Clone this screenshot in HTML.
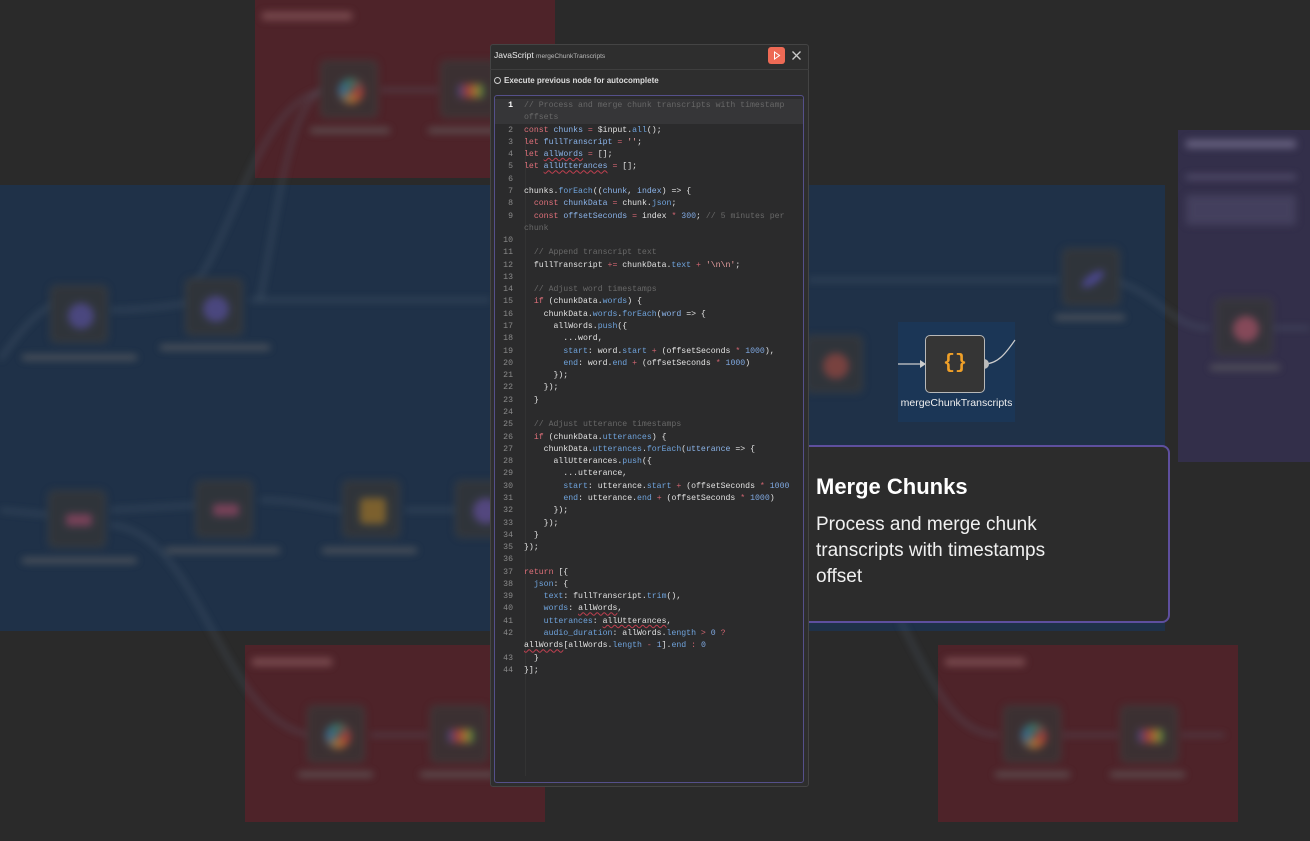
<!DOCTYPE html>
<html><head><meta charset="utf-8"><style>
*{margin:0;padding:0;box-sizing:border-box}
body{width:1310px;height:841px;background:#2a2a2a;position:relative;overflow:hidden;font-family:"Liberation Sans",sans-serif}
.a{position:absolute}
.bg{filter:blur(4px)}
.dim{opacity:.75}
.node{position:absolute;width:58px;height:58px;background:#363636;border:2px solid #444;border-radius:6px}
.blob{position:absolute;left:16px;top:16px;width:26px;height:26px;border-radius:50%;opacity:.7}
.lbl{position:absolute;height:5px;background:#666;border-radius:2px}
#panel{left:490px;top:44px;width:319px;height:743px;background:#2e2e2e;border:1px solid #444;border-radius:3px}
#ed{left:494px;top:95px;width:310px;height:688px;background:#2b2b2c;border:1px solid #55508a;border-radius:3px;overflow:hidden}
.r{position:absolute;left:0;height:12.28px;width:310px;font:8.2px/12.28px "Liberation Mono",monospace;color:#e2e2e2;white-space:pre}
.r .n{position:absolute;left:4px;width:14px;text-align:right;color:#8a8a8a}
.r .c{position:absolute;left:29px}
.k{color:#e0707a}.v{color:#8bb4ea}.p{color:#6fa3dc}.cm{color:#686868}.o{color:#d06470}.num{color:#7fa8e0}.s{color:#e8a0a0}
.u{text-decoration:underline wavy #c04050;text-decoration-thickness:1px}
</style></head><body>
<div class="a" style="left:0;top:185px;width:1165px;height:446px;background:#1f3148"></div>
<div class="a" style="left:255px;top:0;width:300px;height:178px;background:#4e2329"></div>
<div class="a" style="left:245px;top:645px;width:300px;height:177px;background:#4e2329"></div>
<div class="a" style="left:938px;top:645px;width:300px;height:177px;background:#4e2329"></div>
<div class="a" style="left:1178px;top:130px;width:140px;height:332px;background:#332f4a"></div>
<div class="dim">
<div class="a bg" style="left:262px;top:12px;width:90px;height:8px;background:#8a5a5e"></div>
<div class="a bg" style="left:252px;top:658px;width:80px;height:8px;background:#8a5a5e"></div>
<div class="a bg" style="left:945px;top:658px;width:80px;height:8px;background:#8a5a5e"></div>
<div class="a bg" style="left:1186px;top:140px;width:110px;height:8px;background:#7a7494"></div>
<div class="a bg" style="left:1186px;top:175px;width:110px;height:4px;background:#6a6484"></div>
<div class="a bg" style="left:1186px;top:195px;width:110px;height:30px;background:#4a4664"></div>
<svg class="a bg" width="1310" height="841" style="left:0;top:0" fill="none" stroke="#5a6a7a" stroke-width="2">
<path d="M0 360 C40 300 60 300 80 300"/><path d="M110 310 C160 310 200 300 215 300"/>
<path d="M190 290 C230 250 260 90 330 90"/><path d="M260 300 C280 200 290 90 330 90"/>
<path d="M250 300 L490 300"/><path d="M380 90 L440 90"/>
<path d="M0 510 L50 515"/><path d="M110 510 L200 505"/><path d="M110 525 C200 530 220 720 310 735"/>
<path d="M260 500 C300 500 330 510 345 510"/><path d="M405 510 L460 510"/>
<path d="M370 735 L430 735"/><path d="M808 280 L1060 280"/><path d="M1100 280 C1150 280 1170 330 1210 328"/>
<path d="M900 620 C940 700 960 735 1000 735"/><path d="M1060 735 L1120 735"/><path d="M1180 735 L1225 735"/>
<path d="M1270 328 L1310 328"/>
</svg>
<div class="bg">
<div class="node" style="left:320px;top:60px"><div class="blob" style="background:conic-gradient(#3a8,#e44,#fa3,#39d,#3a8)"></div></div>
<div class="node" style="left:440px;top:60px"><div class="blob" style="background:linear-gradient(90deg,#36d,#e44,#fb3,#3c5);border-radius:3px;height:14px;top:22px"></div></div>
<div class="node" style="left:50px;top:285px"><div class="blob" style="background:#6a5ab8"></div></div>
<div class="node" style="left:185px;top:278px"><div class="blob" style="background:#6a5ab8"></div></div>
<div class="node" style="left:48px;top:490px"><div class="blob" style="background:#c05070;border-radius:3px;height:12px;top:22px"></div></div>
<div class="node" style="left:195px;top:480px"><div class="blob" style="background:#c05070;border-radius:3px;height:12px;top:22px"></div></div>
<div class="node" style="left:342px;top:480px"><div class="blob" style="background:#c88a20;border-radius:4px"></div></div>
<div class="node" style="left:455px;top:480px"><div class="blob" style="background:#7a5ab8"></div></div>
<div class="node" style="left:307px;top:705px"><div class="blob" style="background:conic-gradient(#3a8,#e44,#fa3,#39d,#3a8)"></div></div>
<div class="node" style="left:430px;top:705px"><div class="blob" style="background:linear-gradient(90deg,#36d,#e44,#fb3,#3c5);border-radius:3px;height:14px;top:22px"></div></div>
<div class="node" style="left:805px;top:335px"><div class="blob" style="background:#c05040"></div></div>
<div class="node" style="left:1062px;top:248px"><div class="blob" style="background:#6a5ad0;height:10px;top:24px;transform:rotate(-35deg)"></div></div>
<div class="node" style="left:1215px;top:298px"><div class="blob" style="background:#d06070"></div></div>
<div class="node" style="left:1003px;top:705px"><div class="blob" style="background:conic-gradient(#3a8,#e44,#fa3,#39d,#3a8)"></div></div>
<div class="node" style="left:1120px;top:705px"><div class="blob" style="background:linear-gradient(90deg,#36d,#e44,#fb3,#3c5);border-radius:3px;height:14px;top:22px"></div></div>
<div class="lbl" style="left:310px;top:128px;width:80px"></div><div class="lbl" style="left:428px;top:128px;width:70px"></div>
<div class="lbl" style="left:22px;top:355px;width:115px"></div><div class="lbl" style="left:160px;top:345px;width:110px"></div>
<div class="lbl" style="left:22px;top:558px;width:115px"></div><div class="lbl" style="left:165px;top:548px;width:115px"></div>
<div class="lbl" style="left:322px;top:548px;width:95px"></div><div class="lbl" style="left:298px;top:772px;width:75px"></div>
<div class="lbl" style="left:420px;top:772px;width:75px"></div><div class="lbl" style="left:1055px;top:315px;width:70px"></div>
<div class="lbl" style="left:1210px;top:365px;width:70px"></div><div class="lbl" style="left:995px;top:772px;width:75px"></div>
<div class="lbl" style="left:1110px;top:772px;width:75px"></div>
</div>
</div>
<div class="a" style="left:898px;top:322px;width:117px;height:100px;background:#1b3656"></div>
<svg class="a" style="left:898px;top:335px" width="120" height="60"><path d="M0 29 L24 29" stroke="#ccc" stroke-width="1.2"/><path d="M22 25 L28 29 L22 33Z" fill="#ccc"/><rect x="27" y="25" width="3" height="8" fill="#aaa"/><path d="M86 29 C100 29 108 18 117 5" stroke="#ccc" fill="none" stroke-width="1.2"/><circle cx="86" cy="29" r="5" fill="#bbb"/></svg>
<div class="a" style="left:925px;top:335px;width:60px;height:58px;background:#353535;border:1.5px solid #b8b8b8;border-radius:5px;color:#f0a028;font:bold 20px/55px 'Liberation Mono',monospace;text-align:center">{}</div>
<div class="a" style="left:898px;top:397px;width:117px;text-align:center;color:#eee;font-size:10.5px">mergeChunkTranscripts</div>
<div class="a" style="left:790px;top:445px;width:380px;height:178px;background:#2c2c2c;border:2px solid #5e4f9e;border-radius:8px"></div>
<div class="a" style="left:816px;top:474px;color:#fff;font-weight:bold;font-size:22px">Merge Chunks</div>
<div class="a" style="left:816px;top:512px;width:262px;color:#f0f0f0;font-size:19px;line-height:26px">Process and merge chunk transcripts with timestamps offset</div>
<div class="a" id="panel"></div>
<div class="a" style="left:494px;top:50px;color:#eee;font-size:8.5px">JavaScript <span style="font-size:6.5px;color:#bbb">mergeChunkTranscripts</span></div>
<div class="a" style="left:768px;top:47px;width:17px;height:17px;background:#ee6a55;border-radius:3px"><svg width="17" height="17"><path d="M6.5 5 L11.5 8.5 L6.5 12Z" fill="none" stroke="#fff" stroke-width="1"/></svg></div>
<svg class="a" style="left:791px;top:50px" width="11" height="11"><path d="M1.5 1.5L9.5 9.5M9.5 1.5L1.5 9.5" stroke="#ccc" stroke-width="1.3"/></svg>
<div class="a" style="left:490px;top:69px;width:319px;height:1px;background:#3e3e3e"></div>
<div class="a" style="left:494px;top:76px;color:#ddd;font-size:8px;font-weight:bold"><span style="display:inline-block;width:7px;height:7px;border:1px solid #ccc;border-radius:50%;vertical-align:-1px;margin-right:3px"></span>Execute previous node for autocomplete</div>
<div class="a" id="ed">
<div class="a" style="left:0;top:3px;width:310px;height:25px;background:#363638"></div>
<div class="a" style="left:30px;top:40px;width:1px;height:640px;background:#333"></div>
<div id="code"></div>
</div>
<script>
const rows=[
['1','<span class="cm">// Process and merge chunk transcripts with timestamp</span>',1],
['','<span class="cm">offsets</span>'],
['2','<span class="k">const</span> <span class="v">chunks</span> <span class="o">=</span> $input.<span class="p">all</span>();'],
['3','<span class="k">let</span> <span class="v">fullTranscript</span> <span class="o">=</span> <span class="s">\'\'</span>;'],
['4','<span class="k">let</span> <span class="v u">allWords</span> <span class="o">=</span> [];'],
['5','<span class="k">let</span> <span class="v u">allUtterances</span> <span class="o">=</span> [];'],
['6',''],
['7','chunks.<span class="p">forEach</span>((<span class="v">chunk</span>, <span class="v">index</span>) => {'],
['8','  <span class="k">const</span> <span class="v">chunkData</span> <span class="o">=</span> chunk.<span class="p">json</span>;'],
['9','  <span class="k">const</span> <span class="v">offsetSeconds</span> <span class="o">=</span> index <span class="o">*</span> <span class="num">300</span>; <span class="cm">// 5 minutes per</span>'],
['','<span class="cm">chunk</span>'],
['10',''],
['11','  <span class="cm">// Append transcript text</span>'],
['12','  fullTranscript <span class="o">+=</span> chunkData.<span class="p">text</span> <span class="o">+</span> <span class="s">\'\\n\\n\'</span>;'],
['13',''],
['14','  <span class="cm">// Adjust word timestamps</span>'],
['15','  <span class="k">if</span> (chunkData.<span class="p">words</span>) {'],
['16','    chunkData.<span class="p">words</span>.<span class="p">forEach</span>(<span class="v">word</span> => {'],
['17','      allWords.<span class="p">push</span>({'],
['18','        ...word,'],
['19','        <span class="p">start</span>: word.<span class="p">start</span> <span class="o">+</span> (offsetSeconds <span class="o">*</span> <span class="num">1000</span>),'],
['20','        <span class="p">end</span>: word.<span class="p">end</span> <span class="o">+</span> (offsetSeconds <span class="o">*</span> <span class="num">1000</span>)'],
['21','      });'],
['22','    });'],
['23','  }'],
['24',''],
['25','  <span class="cm">// Adjust utterance timestamps</span>'],
['26','  <span class="k">if</span> (chunkData.<span class="p">utterances</span>) {'],
['27','    chunkData.<span class="p">utterances</span>.<span class="p">forEach</span>(<span class="v">utterance</span> => {'],
['28','      allUtterances.<span class="p">push</span>({'],
['29','        ...utterance,'],
['30','        <span class="p">start</span>: utterance.<span class="p">start</span> <span class="o">+</span> (offsetSeconds <span class="o">*</span> <span class="num">1000</span>'],
['31','        <span class="p">end</span>: utterance.<span class="p">end</span> <span class="o">+</span> (offsetSeconds <span class="o">*</span> <span class="num">1000</span>)'],
['32','      });'],
['33','    });'],
['34','  }'],
['35','});'],
['36',''],
['37','<span class="k">return</span> [{'],
['38','  <span class="p">json</span>: {'],
['39','    <span class="p">text</span>: fullTranscript.<span class="p">trim</span>(),'],
['40','    <span class="p">words</span>: <span class="u">allWords</span>,'],
['41','    <span class="p">utterances</span>: <span class="u">allUtterances</span>,'],
['42','    <span class="p">audio_duration</span>: allWords.<span class="p">length</span> <span class="o">></span> <span class="num">0</span> <span class="o">?</span>'],
['','<span class="u">allWords</span>[allWords.<span class="p">length</span> <span class="o">-</span> <span class="num">1</span>].<span class="p">end</span> <span class="o">:</span> <span class="num">0</span>'],
['43','  }'],
['44','}];']];
let h='';rows.forEach((r,i)=>{h+='<div class="r" style="top:'+(4+i*12.28)+'px"><span class="n"'+(r[2]?' style="color:#fff;font-weight:bold"':'')+'>'+r[0]+'</span><span class="c">'+r[1]+'</span></div>';});
document.getElementById('code').innerHTML=h;
</script>
</body></html>
